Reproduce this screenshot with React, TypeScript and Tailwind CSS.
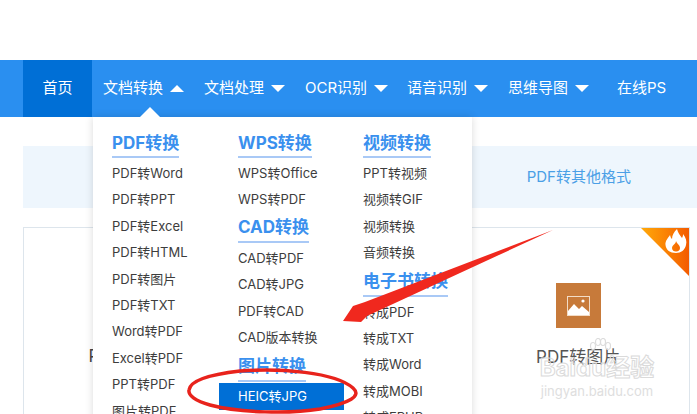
import React from "react";

const font = { fontFamily: 'Inter, "Noto Sans CJK SC", sans-serif' };

function Caret({ up }: { up?: boolean }) {
  return (
    <svg width="14" height="7" viewBox="0 0 14 7" className="ml-[7px] shrink-0">
      <path d={up ? "M0 7 L7 0 L14 7 Z" : "M0 0 L14 0 L7 7 Z"} fill="#fff" />
    </svg>
  );
}

function Head({ children, mt, mb = "mb-[2px]", leading = "leading-[26px]" }: { children: React.ReactNode; mt?: string; mb?: string; leading?: string }) {
  return (
    <div className={`w-fit h-[28px] border-b-2 border-[#a9c9f6] text-[17px] font-bold text-[#3a90ee] whitespace-nowrap ${leading} ${mt ?? ""} ${mb}`}>
      {children}
    </div>
  );
}

function Item({ children, active }: { children: React.ReactNode; active?: boolean }) {
  return (
    <div className={`h-[26.4px] leading-[26.4px] text-[13px] whitespace-nowrap ${active ? "bg-[#006fd6] text-white -mx-[19px] px-[19px] w-[125px]" : "text-[#3d3d3d]"}`}>
      {children}
    </div>
  );
}

function Col({ w, children }: { w: string; children: React.ReactNode }) {
  return <div className={`flex flex-col ${w}`}>{children}</div>;
}

export default function App() {
  return (
    <div className="relative h-[414px] w-[697px] overflow-hidden bg-white" style={font}>
      <div className="h-[60px]" />
      <nav className="flex h-[57px] items-center bg-[#2a8ff0] pl-[23px] text-[15px] text-white">
        <div className="flex h-full w-[69px] items-center justify-center bg-[#006fd6]">首页</div>
        <div className="ml-[11px] flex w-[101px] items-center">文档转换<Caret up /></div>
        <div className="flex w-[101px] items-center">文档处理<Caret /></div>
        <div className="flex w-[102px] items-center">OCR识别<Caret /></div>
        <div className="flex w-[101px] items-center">语音识别<Caret /></div>
        <div className="flex w-[109px] items-center">思维导图<Caret /></div>
        <div>在线PS</div>
      </nav>

      <div className="ml-[23px] mt-[29px] grid h-[62px] grid-cols-3 items-center bg-[#eef6fd] pr-[7px] text-[15px] text-[#4a9fe6]">
        <div />
        <div />
        <div className="text-center">PDF转其他格式</div>
      </div>

      <div className="relative ml-[23px] mt-[19px] grid h-[220px] w-[667px] grid-cols-3 border border-b-0 border-[#dde5ec]">
        <div className="pt-[116px] text-center text-[17px] text-[#444]">PDF转Word</div>
        <div />
        <div className="flex flex-col items-center pt-[55px]">
          <div className="flex h-[45px] w-[45px] items-center justify-center bg-[#c77a3a]">
            <svg width="23" height="20" viewBox="0 0 23 20">
              <rect x="0.5" y="0.5" width="22" height="19" fill="none" stroke="#f3dcc6" />
              <path d="M1 19 L1 15 L7 8 L12 13 L15 10 L22 16 L22 19 Z" fill="#fff" />
              <circle cx="16" cy="5" r="1.6" fill="#fff" />
            </svg>
          </div>
          <div className="mt-[17px] text-[17px] leading-[24px] text-[#555]">PDF转图片</div>
        </div>
        <div className="absolute right-0 top-0 h-[48px] w-[48px] bg-gradient-to-r from-[#ffa90a] to-[#f35a00] [clip-path:polygon(0_0,100%_0,100%_100%)]">
          <svg width="22" height="25" viewBox="0 0 22 25" className="absolute right-[2px] top-[1px]">
            <path
              d="M12 0 C13 4 15 6 17 9 C18 7 18 6 18 5 C21 9 22 12 21 16 C20 21 16 24 11 24 C5 24 1 21 0.5 16 C0 12 3 9 5 6 C5.5 8 6 9 7 10 C7 6 9 3 12 0 Z M11 12 C11 15 7 16 7 19 C7 21.5 9 22.5 11 22.5 C13.5 22.5 15 21 15 19 C15 16 12 15 11 12 Z"
              fill="#fff"
              fillRule="evenodd"
            />
          </svg>
        </div>
      </div>

      {/* Dropdown */}
      <div className="absolute left-[93px] top-[117px] flex h-[320px] w-[379px] bg-white pl-[19px] pt-[13px] shadow-[0_0_8px_rgba(0,0,0,0.15)]">
        <Col w="w-[126px]">
          <Head>PDF转换</Head>
          <Item>PDF转Word</Item>
          <Item>PDF转PPT</Item>
          <Item>PDF转Excel</Item>
          <Item>PDF转HTML</Item>
          <Item>PDF转图片</Item>
          <Item>PDF转TXT</Item>
          <Item>Word转PDF</Item>
          <Item>Excel转PDF</Item>
          <Item>PPT转PDF</Item>
          <Item>图片转PDF</Item>
        </Col>
        <Col w="w-[125px]">
          <Head>WPS转换</Head>
          <Item>WPS转Office</Item>
          <Item>WPS转PDF</Item>
          <Head mt="mt-[2px]" leading="leading-[24px]">CAD转换</Head>
          <Item>CAD转PDF</Item>
          <Item>CAD转JPG</Item>
          <Item>PDF转CAD</Item>
          <Item>CAD版本转换</Item>
          <Head mt="mt-[4px]" mb="mb-[1px]" leading="leading-[24px]">图片转换</Head>
          <Item active>HEIC转JPG</Item>
        </Col>
        <Col w="w-[100px]">
          <Head>视频转换</Head>
          <Item>PPT转视频</Item>
          <Item>视频转GIF</Item>
          <Item>视频转换</Item>
          <Item>音频转换</Item>
          <Head mt="mt-[3px]" leading="leading-[24px]">电子书转换</Head>
          <Item>转成PDF</Item>
          <Item>转成TXT</Item>
          <Item>转成Word</Item>
          <Item>转成MOBI</Item>
          <Item>转成EPUB</Item>
        </Col>
      </div>
      <div className="absolute left-[140px] top-[107px] h-0 w-0 border-x-[10px] border-b-[10px] border-x-transparent border-b-white" />

      {/* Watermark */}
      <div className="absolute left-[534px] top-[338px] flex w-[126px] flex-col items-center">
        <svg width="22" height="18" viewBox="0 0 22 18" className="ml-[6px]">
          <g fill="none" stroke="#dcdcdc" strokeWidth="1.2">
            <ellipse cx="4" cy="8" rx="2.5" ry="3.5" />
            <ellipse cx="9" cy="4" rx="2.5" ry="3.5" />
            <ellipse cx="14" cy="4" rx="2.5" ry="3.5" />
            <ellipse cx="19" cy="8" rx="2.5" ry="3.5" />
          </g>
        </svg>
        <div className="-mt-[2px] whitespace-nowrap text-[24px] font-bold leading-[28px] text-transparent [-webkit-text-stroke:1px_#dadada]">Baidu经验</div>
        <div className="mt-[1px] whitespace-nowrap text-[13px] leading-[16px] text-[#dedede]">jingyan.baidu.com</div>
      </div>

      {/* Annotations */}
      <svg width="697" height="414" viewBox="0 0 697 414" className="pointer-events-none absolute left-0 top-0">
        <path d="M553 230 L365 302 L353 306 L343 321 L361 322 L367 316 Z" fill="#f0281e" />
        <path d="M240 371 C280 368 335 372 353 388 C362 396 350 403 320 409 C290 414 240 413 210 405 C195 401 188 395 189 390 C190 382 205 375 240 371 Z" fill="none" stroke="#e8231c" strokeWidth="3.5" />
      </svg>
    </div>
  );
}
